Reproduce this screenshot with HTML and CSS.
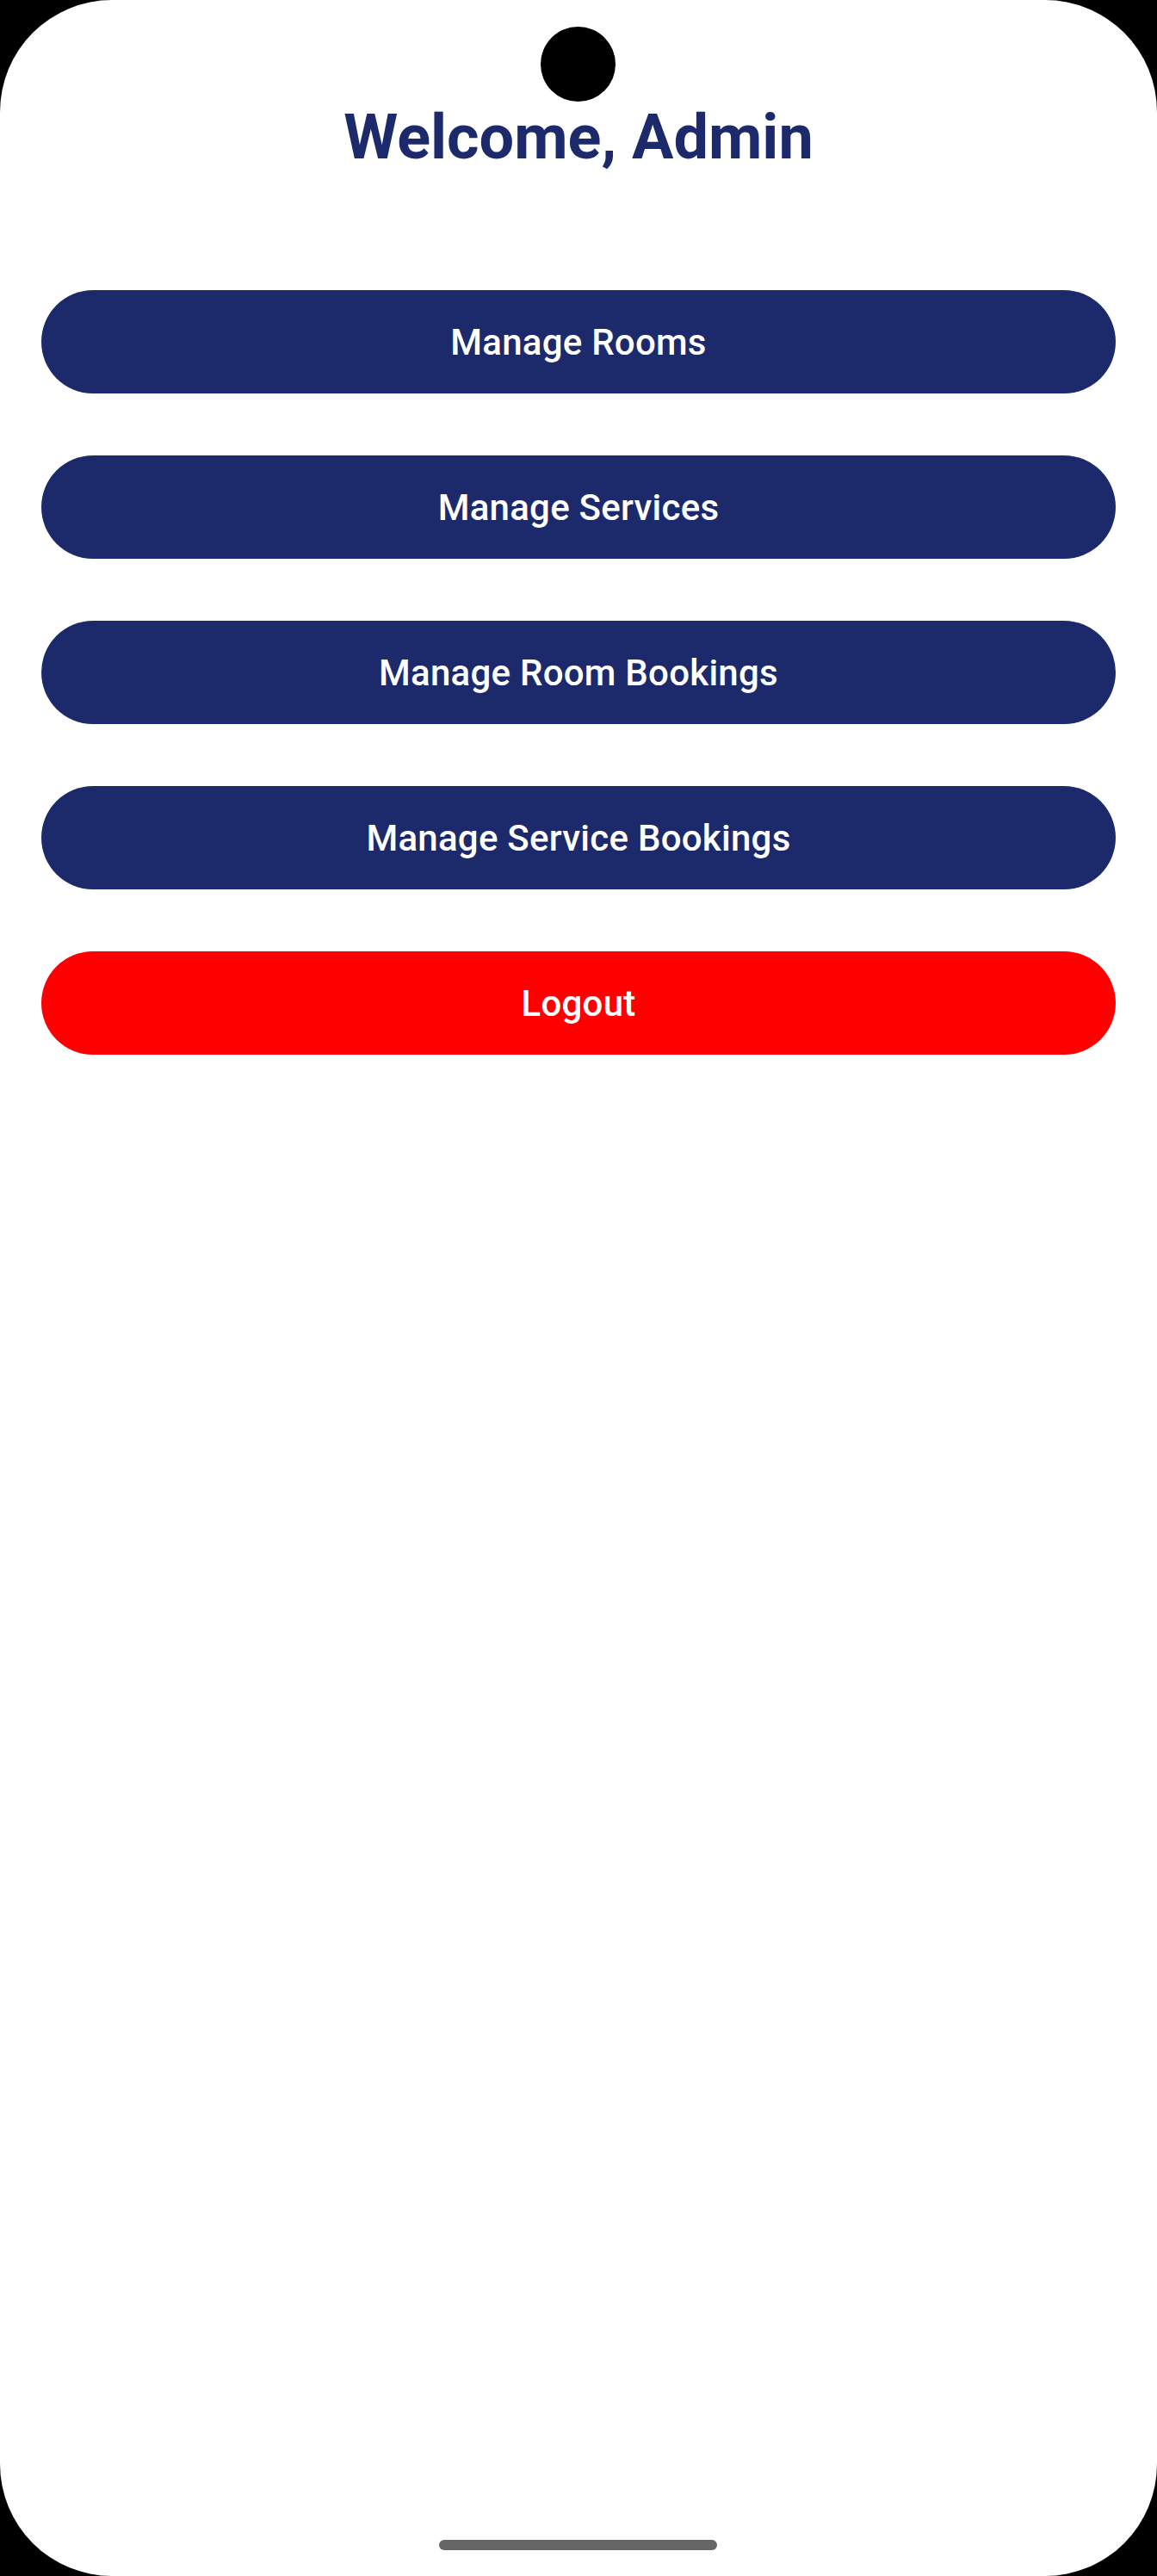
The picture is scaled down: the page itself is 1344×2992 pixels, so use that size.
FILE: index.html
```html
<!DOCTYPE html>
<html lang="en">
<head>
<meta charset="utf-8">
<title>Admin</title>
<link rel="stylesheet" href="styles.css">
</head>
<body>
<div class="screen">
  <div class="camera"></div>
  <main class="content">
    <h1 class="title">Welcome, Admin</h1>
    <nav class="actions">
      <button class="btn">Manage Rooms</button>
      <button class="btn">Manage Services</button>
      <button class="btn">Manage Room Bookings</button>
      <button class="btn">Manage Service Bookings</button>
      <button class="btn btn-logout">Logout</button>
    </nav>
  </main>
  <div class="home-indicator"></div>
</div>
</body>
</html>
```
FILE: styles.css
```css
html, body {
  margin: 0;
  padding: 0;
  background: #000;
}
.screen {
  position: relative;
  width: 1344px;
  height: 2992px;
  background: #fff;
  border-radius: 130px;
  overflow: hidden;
  font-family: Roboto, "Noto Sans", sans-serif;
}
.camera {
  position: absolute;
  top: 31px;
  left: 628px;
  width: 87px;
  height: 87px;
  border-radius: 50%;
  background: #000;
}
.content {
  padding: 117px 48px 0;
  display: flex;
  flex-direction: column;
}
.title {
  margin: 0;
  text-align: center;
  font-size: 72px;
  line-height: 86px;
  font-weight: 700;
  color: #1c2a6c;
}
.actions {
  margin-top: 134px;
  display: flex;
  flex-direction: column;
  gap: 72px;
}
.btn {
  height: 120px;
  border: none;
  border-radius: 60px;
  background: #1c2a6c;
  color: #fff;
  font-family: Roboto, "Noto Sans", sans-serif;
  font-size: 42px;
  font-weight: 500;
  letter-spacing: 0.25px;
  padding: 0;
  cursor: pointer;
}
.btn-logout {
  background: #ff0000;
}
.home-indicator {
  position: absolute;
  bottom: 30px;
  left: 510px;
  width: 323px;
  height: 12px;
  border-radius: 6px;
  background: #666;
}
```
